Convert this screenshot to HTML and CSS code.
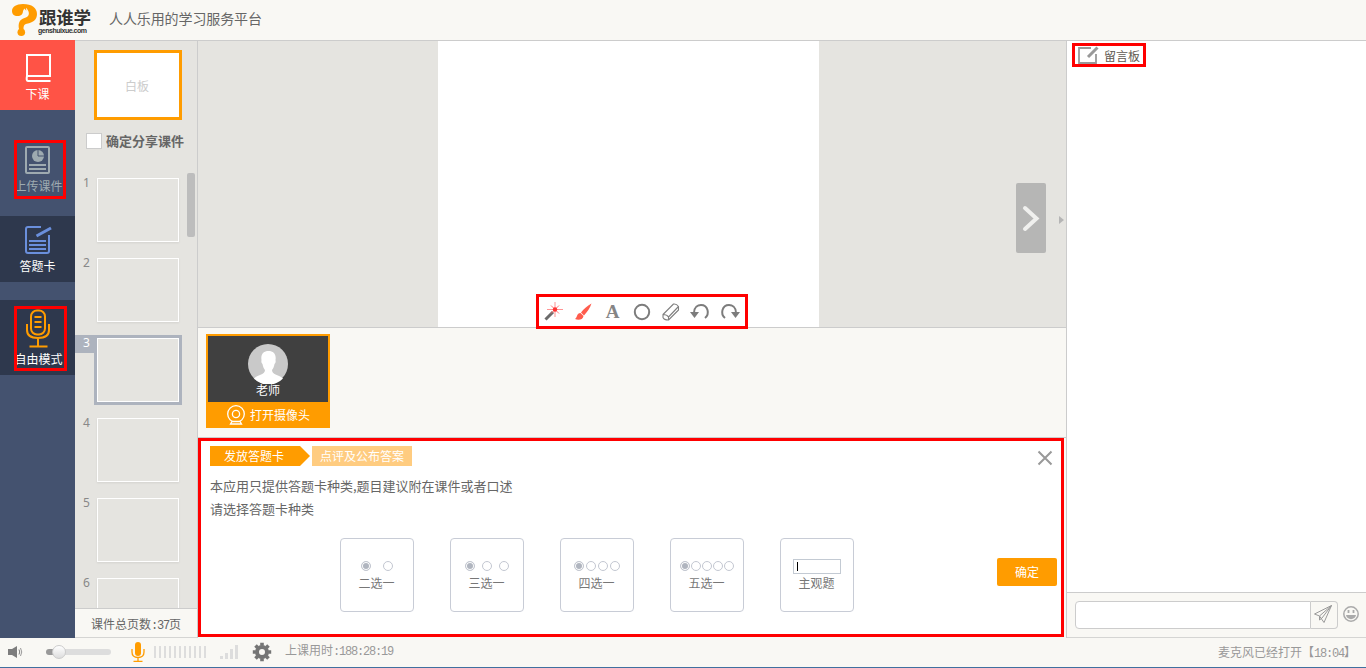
FILE: index.html
```html
<!DOCTYPE html>
<html lang="zh-CN">
<head>
<meta charset="utf-8">
<title>跟谁学</title>
<link rel="stylesheet" href="styles.css">
</head>
<body>
<div class="app">
  <header class="header">
    <svg class="logo-mark" width="26" height="34" viewBox="0 0 26 34"><path d="M0 8C0 4 4 1 11 1c9 0 14 4 14 10 0 5.500-4 8.500-9 9.500-3.500.7-4.500 1.700-4.500 5.500H7C6 21 7 16.500 12.500 15c4-1 5-3.500 4-6.500-.5-1.500-1.500-2.800-2.500-3.800l.3 3-2-2.200-1.300 2.500C11 11 9 13 5.500 13 2 13 0 11 0 8z" fill="#ff9c00"/><circle cx="9.300" cy="29.300" r="3.800" fill="#ff9c00"/></svg>
    <div class="logo-text"><span class="logo-name">跟谁学</span><span class="logo-url">genshuixue.com</span></div>
    <span class="tagline">人人乐用的学习服务平台</span>
  </header>

  <div class="body">
    <nav class="nav">
      <div class="nav-item nav-end">
        <svg width="28" height="30" viewBox="0 0 28 30" fill="none" stroke="#fff" stroke-width="2"><path d="M3 23V2h23v21H3q-1 5 1 5h22.500" /></svg>
        <span>下课</span>
      </div>
      <div class="nav-item nav-upload">
        <svg width="28" height="30" viewBox="0 0 28 30"><rect x="2" y="2" width="23" height="26" rx="1" fill="none" stroke="#9eaab0" stroke-width="2"/><circle cx="14" cy="11" r="6" fill="#9eaab0"/><path d="M14 5v6h6" fill="none" stroke="#44526f" stroke-width="1"/><path d="M5 20h17M5 24h17" stroke="#9eaab0" stroke-width="2"/></svg>
        <span>上传课件</span>
        <i class="mark mark-upload"></i>
      </div>
      <div class="nav-item nav-card">
        <svg width="28" height="30" viewBox="0 0 28 30" fill="none" stroke="#6a8fdc" stroke-width="2"><path d="M17 2H4Q2 2 2 4v22q0 2 2 2h19q2 0 2-2V10M5 16h17M5 20h17M5 24h17"/><path d="M12.500 11L27 3" stroke-width="3"/></svg>
        <span>答题卡</span>
      </div>
      <div class="nav-item nav-mode">
        <svg width="26" height="40" viewBox="0 0 26 40" fill="none" stroke="#ff9c00" stroke-width="2"><rect x="6" y="1.500" width="14" height="24" rx="6"/><path d="M9.500 8h7M9.500 13h7M9.500 18h7M2 15v6q0 8 11 8t11-8v-6M13 29v8M4.500 37.500h18"/></svg>
        <span>自由模式</span>
        <i class="mark mark-mode"></i>
      </div>
    </nav>

    <aside class="slides">
      <div class="white-thumb">白板</div>
      <div class="share"><i class="checkbox"></i><b>确定分享课件</b></div>
      <div class="list">
        <div class="slide"><span>1</span><i></i></div>
        <div class="slide"><span>2</span><i></i></div>
        <div class="slide selected"><span>3</span><i></i></div>
        <div class="slide"><span>4</span><i></i></div>
        <div class="slide"><span>5</span><i></i></div>
        <div class="slide"><span>6</span><i></i></div>
        <div class="scrollbar"></div>
      </div>
      <div class="total">课件总页数<span class="num">:37</span>页</div>
    </aside>

    <main class="main">
      <section class="board">
        <div class="canvas"></div>
        <div class="next"><svg width="30" height="70" viewBox="0 0 30 70"><path d="M9 25l11.500 10.500L9 46" fill="none" stroke="#f0f0ee" stroke-width="4" stroke-linecap="round"/></svg></div>
        <div class="collapse"></div>
        <div class="tools">
          <svg width="20" height="20" viewBox="0 0 20 20"><path d="M1.500 17.500L9 10" stroke="#6b6b6b" stroke-width="3"/><path d="M11 0v15M3 7.500h16" stroke="#f88" stroke-width=".9"/><path d="M7 3.500l8 8M15 3.500l-8 8" stroke="#f66" stroke-width=".9"/><circle cx="11" cy="7.500" r="2.200" fill="#f33"/></svg>
          <svg width="20" height="20" viewBox="0 0 20 20"><path d="M18.500 1.500C14 4 10.500 7 8 10.500l3 3c3.500-4 6-7.300 7.500-12zM7.500 11c-4 0-3 4.500-5.500 6 3 1.500 8 1 8.500-3z" fill="#ff5c4d"/></svg>
          <span class="tool-a">A</span>
          <svg width="20" height="20" viewBox="0 0 20 20"><circle cx="10" cy="10" r="7.200" fill="none" stroke="#7c7c7c" stroke-width="2"/></svg>
          <svg width="20" height="20" viewBox="0 0 20 20" fill="none" stroke="#808080" stroke-width="1.100" stroke-linejoin="round"><path d="M2 12.500L12.500 2q3-.5 5 2.500v3.500L7.500 18Q3 18 2 15.500zM2 12.500q4 0 5.500 2.500l10-10.500M7.500 15v3"/></svg>
          <svg class="undo" width="20" height="20" viewBox="0 0 20 20"><path d="M4 11C4 5 8 3 11 3c7 0 9 9 4 13" fill="none" stroke="#7c7c7c" stroke-width="2"/><path d="M0 10h9l-4.500 6z" fill="#7c7c7c"/></svg>
          <svg width="20" height="20" viewBox="0 0 20 20"><path d="M16 11c0-6-4-8-7-8C2 3 0 12 5 16" fill="none" stroke="#7c7c7c" stroke-width="2"/><path d="M11 10h9l-4.500 6z" fill="#7c7c7c"/></svg>
        </div>
      </section>
      <section class="video">
        <div class="teacher">
          <div class="portrait">
            <svg width="40" height="40" viewBox="0 0 40 40"><circle cx="20" cy="20" r="20" fill="#c9c9c9"/><path d="M20.500 7c-5 0-8 3.500-7 9-.5 2 .3 3.500 1 4 .5 3 1.500 5 2.500 6 0 5-6.500 4-11 8.500a20 20 0 0 0 29 0C30 30 24 31 24 26c1-1 2-3 2.500-6 .8-.5 1.500-2 1-4 1-5.500-2-9-7-9z" fill="#fff"/></svg>
            <span>老师</span>
          </div>
          <div class="camera">
            <svg width="20" height="20" viewBox="0 0 20 20" fill="none" stroke="#fff" stroke-width="1.300"><circle cx="10" cy="9" r="8.300"/><circle cx="10" cy="9" r="3.600"/><path d="M6 16.500h8l1.500 2.500h-11z" fill="#ff9c00"/></svg>
            <span>打开摄像头</span>
          </div>
        </div>
      </section>
      <section class="answer">
        <div class="steps"><span class="step current">发放答题卡</span><span class="step later">点评及公布答案</span></div>
        <svg class="close" width="16" height="16" viewBox="0 0 16 16"><path d="M1.500 1.500l13 13M14.500 1.500l-13 13" stroke="#999" stroke-width="2"/></svg>
        <p>本应用只提供答题卡种类,题目建议附在课件或者口述</p>
        <p>请选择答题卡种类</p>
        <div class="choices">
          <div class="choice"><div class="dots two"><i class="on"></i><i></i></div><span>二选一</span></div>
          <div class="choice"><div class="dots three"><i class="on"></i><i></i><i></i></div><span>三选一</span></div>
          <div class="choice"><div class="dots four"><i class="on"></i><i></i><i></i><i></i></div><span>四选一</span></div>
          <div class="choice"><div class="dots"><i class="on"></i><i></i><i></i><i></i><i></i></div><span>五选一</span></div>
          <div class="choice"><div class="field"></div><span>主观题</span></div>
        </div>
        <div class="confirm">确定</div>
      </section>
    </main>

    <aside class="chat">
      <div class="chat-title"><svg width="22" height="20" viewBox="0 0 22 20" fill="none" stroke="#999" stroke-width="1.800"><path d="M14 3H2v15h17V9"/><path d="M11 12l9.500-9.500" stroke-width="3"/></svg><span>留言板</span></div>
      <div class="messages"></div>
      <div class="compose">
        <div class="input"></div>
        <div class="send"><svg width="20" height="20" viewBox="0 0 20 20" fill="none" stroke="#999" stroke-width="1"><path d="M17.500 1.500L.5 10l5 2 4.500 6.500zM17.500 1.500L5.500 12v4l2.500-2z"/></svg></div>
        <svg class="smile" width="18" height="18" viewBox="0 0 18 18"><circle cx="9" cy="9" r="7.200" fill="none" stroke="#aaa" stroke-width="1.500"/><path d="M6.500 5v3M11.500 5v3" stroke="#aaa" stroke-width="1.800"/><path d="M4 10h10c-.5 5.500-9.500 5.500-10 0z" fill="#aaa"/></svg>
      </div>
    </aside>
  </div>

  <footer class="footer">
    <svg class="speaker" width="16" height="14" viewBox="0 0 16 14"><path d="M0 4h4l5-3v12l-5-3H0z" fill="#7d7d7d"/><path d="M11 4.500q1.500 2.500 0 5" fill="none" stroke="#7d7d7d"/><path d="M12.500 3q2.500 4 0 8" fill="none" stroke="#999"/></svg>
    <div class="volume"><i></i></div>
    <svg class="mic" width="14" height="20" viewBox="0 0 14 20"><rect x="4" y="0" width="6" height="14" rx="3" fill="#ff9c00"/><path d="M1 7v3c0 3.500 2 5.500 6 5.500s6-2 6-5.500V7M7 15v4M2.500 19.300h9" fill="none" stroke="#ff9c00" stroke-width="1.300"/></svg>
    <div class="level"></div>
    <svg class="signal" width="20" height="14" viewBox="0 0 20 14" fill="#ddd"><path d="M0 11h3v3H0zM5 8h3v6H5zM10 4h3v10h-3zM15 0h3v14h-3z"/></svg>
    <svg class="gear" width="20" height="20" viewBox="0 0 20 20"><g fill="none" stroke="#757575"><circle cx="10" cy="10" r="5" stroke-width="4"/><path d="M10 .8v3M10 16.200v3M.8 10h3M16.200 10h3M3.500 3.500l2 2M14.500 14.500l2 2M16.500 3.500l-2 2M5.500 14.500l-2 2" stroke-width="3.600"/></g></svg>
    <span class="elapsed">上课用时<span class="num">:188:28:19</span></span>
    <span class="status">麦克风已经打开【<span class="num">18:04</span>】</span>
  </footer>
</div>
</body>
</html>
```
FILE: styles.css
```css
* { box-sizing: border-box; }
body { margin: 0; font: 12px/16px "Noto Sans CJK SC", sans-serif; color: #666; background: #f9f8f4; overflow: hidden; }
p { margin: 0; }
i { font-style: normal; display: block; }
.app { height: 668px; display: flex; flex-direction: column; border-bottom: 1px solid #41709f; }
.num { font-family: "Liberation Mono", monospace; font-size: 12px; letter-spacing: -1.2px; }

.header { height: 40px; flex: none; display: flex; align-items: flex-start; padding-left: 12px; }
.logo-mark { margin-top: 3px; }
.logo-text { width: 56px; display: flex; flex-direction: column; color: #333; }
.logo-name { font-size: 17.500px; line-height: 18px; font-weight: 700; margin: 8px 0 0 1px; letter-spacing: -0.2px; white-space: nowrap; }
.logo-url { font: bold 7px/7px "Liberation Sans", sans-serif; letter-spacing: -0.48px; margin-top: 1px; white-space: nowrap; color: #333; }
.tagline { font-size: 14px; line-height: 20px; letter-spacing: -0.1px; margin: 8px 0 0 15px; }

.body { height: 598px; flex: none; display: flex; }
.nav { width: 75px; background: #44526f; }
.nav-item { position: relative; display: flex; flex-direction: column; align-items: center; color: #fff; }
.nav-item svg { display: block; }
.nav-end { height: 70px; background: #ff5346; padding-top: 13px; }
.nav-end span { margin-top: 3px; }
.nav-upload { height: 106px; padding-top: 35px; color: #9eaab0; }
.nav-upload span { margin: 3px 0 0 2px; }
.nav-card { height: 66px; padding-top: 9px; background: #2e384d; }
.nav-card span { margin-top: 3px; }
.nav-mode { height: 75px; margin-top: 18px; padding-top: 9px; background: #2e384d; }
.nav-mode span { margin: 2px 0 0 2px; }
.mark { position: absolute; border: 3px solid #f00; left: 14px; }
.mark-upload { top: 30px; width: 52px; height: 59px; }
.mark-mode { top: 6px; width: 53px; height: 65px; }

.slides { width: 123px; background: #e5e4e0; border-right: 1px solid #ccc; border-top: 1px solid #ccc; display: flex; flex-direction: column; }
.white-thumb { width: 88px; height: 70px; flex: none; margin: 9px 0 0 19px; padding-right: 2px; border: 3px solid #ff9c00; background: #fff; color: #ccc; text-align: center; line-height: 66px; }
.share { height: 18px; display: flex; align-items: center; gap: 4px; margin: 12px 0 0 11px; font-size: 13px; white-space: nowrap; }
.checkbox { width: 16px; height: 16px; background: #fff; border: 1px solid #ccc; }
.list { position: relative; height: 454px; margin-top: 4px; padding-top: 21px; overflow: hidden; flex: 1; }
.slide { height: 70px; margin-bottom: 10px; display: flex; font: 12px/16px "Noto Sans", sans-serif; color: #888; }
.slide span { width: 19px; padding-left: 8px; height: 18px; line-height: 15px; }
.slide i { width: 82px; height: 64px; margin: 3px 0 0 3px; border: 1px solid #fff; box-shadow: 0 1px 2px rgba(0,0,0,.08); }
.selected span { background: #adb3be; color: #fff; }
.selected i { box-shadow: 0 0 0 3px #adb3be; }
.scrollbar { position: absolute; left: 112px; top: 19px; width: 8px; height: 64px; border-radius: 2px; background: #bdbdbd; }
.total { height: 30px; flex: none; border-top: 1px solid #ccc; border-bottom: 1px solid #d5d5d3; background: #f9f8f4; line-height: 29px; padding-left: 16px; }

.main { width: 869px; display: flex; flex-direction: column; border-right: 1px solid #ccc; border-top: 1px solid #ccc; }
.board { position: relative; height: 287px; background: #e5e4e0; border-bottom: 1px solid #ccc; padding-left: 240px; }
.canvas { width: 381px; height: 286px; background: #fff; }
.next { position: absolute; left: 818px; top: 142px; width: 30px; height: 70px; background: #b6b6b5; border-radius: 2px; }
.collapse { position: absolute; left: 861px; top: 175px; border: 4px solid transparent; border-left: 5px solid #b5b5b5; border-right: 0; }
.tools { position: absolute; left: 338px; top: 253px; width: 212px; height: 35px; border: 3px solid #f00; background: #fff; display: flex; align-items: center; gap: 9.300px; padding-left: 5px; z-index: 1; }
.tools svg { flex: none; }
.tool-a { width: 20px; text-align: center; font: bold 19px/20px "Liberation Serif", serif; color: #858585; padding-top: 1px; }
.video { height: 110px; border-bottom: 1px solid #ccc; padding: 6px 8px; }
.teacher { width: 124px; height: 94px; border: 2px solid #ff9c00; background: #ff9c00; color: #fff; }
.portrait { height: 66px; background: #404040; display: flex; flex-direction: column; align-items: center; padding-top: 8px; }
.portrait span { margin-top: -2px; }
.portrait svg { flex: none; }
.camera { height: 26px; display: flex; align-items: center; gap: 4px; padding-left: 18px; }

.answer { position: relative; width: 866px; height: 199px; background: #fff; border: 3px solid #f00; padding: 5px 9px; }
.steps { display: flex; height: 20px; color: #fff; line-height: 20px; margin-bottom: 8px; }
.current { width: 100px; padding-left: 14px; background: #ff9c00; clip-path: polygon(0 0, 90% 0, 100% 50%, 90% 100%, 0 100%); }
.later { width: 100px; margin-left: 2px; background: #ffcc80; text-align: center; }
.close { position: absolute; right: 8px; top: 9px; }
.answer p { font-size: 13px; line-height: 23px; }
.choices { display: flex; gap: 36px; margin: 18px 0 0 130px; }
.choice { width: 74px; height: 74px; border: 1px solid #c8ccd6; border-radius: 4px; display: flex; flex-direction: column; align-items: center; padding-top: 20px; color: #777; }
.choice span { padding-right: 1px; }
.dots { height: 14px; display: flex; align-items: center; gap: 1px; margin-bottom: 2px; }
.dots i { width: 10px; height: 10px; border: 1px solid #c3c7d1; border-radius: 50%; }
.dots .on { background: #b0b5bf; box-shadow: inset 0 0 0 1px #fff; }
.two { gap: 12px; }
.three { gap: 7px; }
.four { gap: 2px; }
.field { width: 48px; height: 15px; border: 1px solid #c3cad3; margin-bottom: 1px; padding: 2px 3px; }
.field::before { content: ""; display: block; width: 1px; height: 9px; background: #000; }
.confirm { position: absolute; right: 4px; top: 117px; width: 60px; height: 28px; border-radius: 2px; background: #ff9c00; color: #fff; line-height: 28px; text-align: center; }

.chat { width: 299px; display: flex; flex-direction: column; background: #fff; border-top: 1px solid #ccc; }
.chat-title { width: 74px; height: 24px; margin: 2px 0 0 5px; border: 3px solid #f00; display: flex; align-items: center; gap: 5px; padding-left: 2px; color: #5f5a52; white-space: nowrap; }
.chat-title svg { flex: none; }
.chat-title span { padding-top: 1px; }
.messages { flex: 1; }
.compose { height: 46px; background: #f9f8f4; border-top: 1px solid #ccc; border-bottom: 1px solid #d5d5d3; padding: 8px; display: flex; }
.input { width: 236px; height: 28px; flex: none; background: #fff; border: 1px solid #ccc; border-radius: 4px 0 0 4px; }
.send { width: 27px; height: 28px; flex: none; border: 1px solid #ccc; border-left: 0; border-radius: 0 4px 4px 0; padding: 2px 3px; }
.smile { margin: 4px 0 0 4px; flex: none; }

.footer { height: 29px; display: flex; align-items: center; padding: 0 10px 2px 8px; color: #999; }
.footer svg { flex: none; }
.volume { width: 65px; height: 6px; margin-left: 22px; border-radius: 3px; background: linear-gradient(90deg, #999 12px, #ddd 12px); }
.volume i { position: relative; left: 6px; top: -4px; width: 14px; height: 14px; border-radius: 50%; background: linear-gradient(#fff, #ddd); border: 1px solid #ccc; }
.mic { margin-left: 20px; }
.level { width: 53px; height: 12px; margin: 0 13px 0 9px; background: repeating-linear-gradient(90deg, #ddd 0 2px, transparent 2px 5px); }
.gear { margin: 0 14px 0 12px; }
.elapsed { padding-bottom: 2px; margin-left: -1px; }
.status { margin-left: auto; padding-top: 2px; }
```
